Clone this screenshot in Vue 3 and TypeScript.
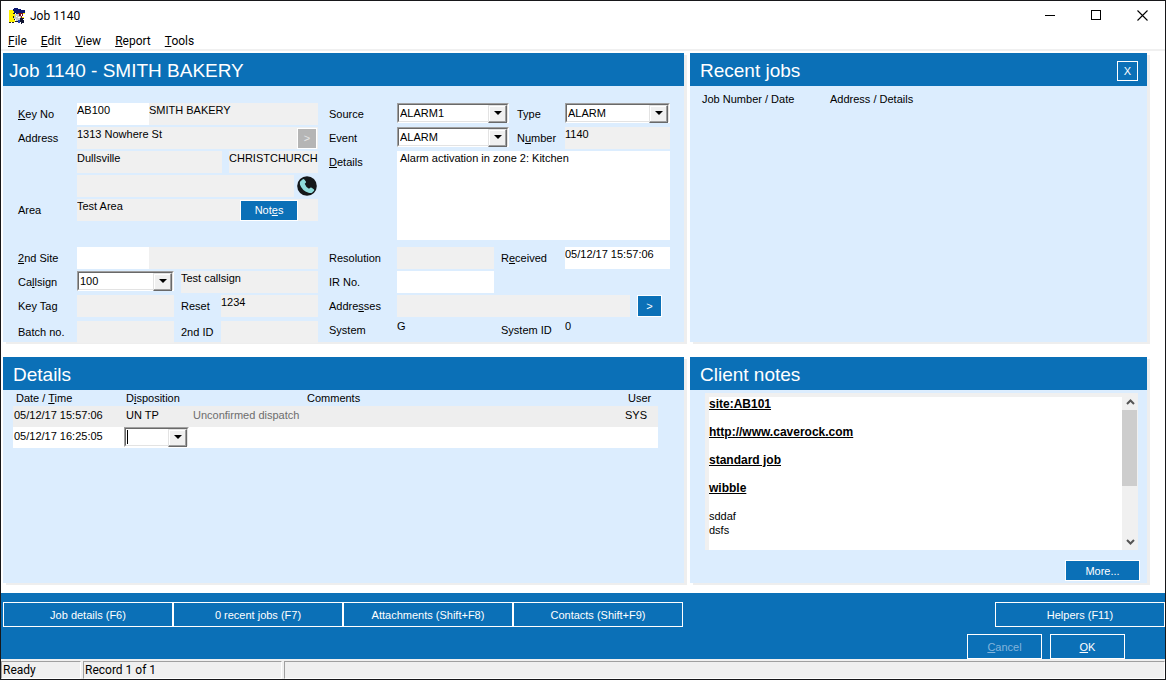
<script setup lang="ts">
import { ref } from 'vue'

const menus: string[] = ['File', 'Edit', 'View', 'Report', 'Tools']
const tabs: string[] = ['Job details (F6)', '0 recent jobs (F7)', 'Attachments (Shift+F8)', 'Contacts (Shift+F9)']
const noteLinks: string[] = ['site:AB101', 'http://www.caverock.com', 'standard job', 'wibble']

const keyNo = ref('AB100')
const source = ref('ALARM1')
const event = ref('ALARM')
const jobType = ref('ALARM')
const callsign = ref('100')
const details = ref('Alarm activation in zone 2: Kitchen')
const received = ref('05/12/17 15:57:06')
const disposition = ref('')
</script>

<template>
  <div class="window">
    <header class="titlebar">
      <svg class="app-icon" viewBox="0 0 16 16" shape-rendering="crispEdges" aria-hidden="true">
        <path d="M0 2h6v12H0zM14 2h2v4h-2zM13 9h2v1h-2z" fill="#fff200" />
        <path d="M5 0h4v1h3v1h4v3h-3v1H7V5H5V3H4V1h1z" fill="#0a1670" />
        <path d="M9 5h5v3h-1v2h-2V8H9z" fill="#7a1020" />
        <path d="M6 6h4v2h2v4H9v1H7v-2H5V9h1z" fill="#c4c7ca" />
        <path d="M7 8h1v1H7zM9 9h2v1H9zM12 6h1v2h-1z" fill="#fff" />
        <path d="M4 5h2v1H4zM4 8h1v2H4zM5 11h1v1H5zM6 13h4v1H6zM11 10h4v1h-1v1h1v3h-2v1h-1v-2h-1z" fill="#101430" />
        <path d="M9 12h2v3H9z" fill="#2446b8" />
        <path d="M0 14h2v1H0zM3 14h2v1H3z" fill="#222" />
      </svg>
      <span class="caption">Job 1140</span>
      <div class="win-buttons">
        <button type="button" aria-label="Minimize">
          <svg viewBox="0 0 11 11" shape-rendering="crispEdges"><path d="M0 5.5h10" stroke="#000" /></svg>
        </button>
        <button type="button" aria-label="Maximize">
          <svg viewBox="0 0 11 11" shape-rendering="crispEdges"><path d="M.5 .5h9v9h-9z" stroke="#000" fill="none" /></svg>
        </button>
        <button type="button" aria-label="Close">
          <svg viewBox="0 0 11 11"><path d="M.5 .5l10 10M10.5 .5l-10 10" stroke="#000" stroke-width="1.1" /></svg>
        </button>
      </div>
    </header>

    <nav class="menubar">
      <button v-for="m in menus" :key="m" type="button"><u>{{ m[0] }}</u>{{ m.slice(1) }}</button>
    </nav>

    <main class="workspace">
      <section class="panel">
        <h1 class="panel-head head-job">Job 1140 - SMITH BAKERY</h1>
        <div class="job-form">
          <div class="form-col">
            <div class="row">
              <label for="keyno"><u>K</u>ey No</label>
              <div class="joined">
                <input id="keyno" v-model="keyNo" class="field code" />
                <input class="field gray" value="SMITH BAKERY" readonly aria-label="Client name" />
              </div>
            </div>
            <div class="row">
              <label for="address">Address</label>
              <div class="gray joined">
                <input id="address" class="field gray" value="1313 Nowhere St" readonly />
                <button type="button" class="btn more-address" disabled>&gt;</button>
              </div>
            </div>
            <div class="row no-label">
              <div class="city">
                <input class="field gray" value="Dullsville" readonly aria-label="Suburb" />
                <input class="field gray" value="CHRISTCHURCH" readonly aria-label="City" />
              </div>
            </div>
            <div class="row no-label">
              <div class="phone">
                <input class="field gray" readonly aria-label="Phone" />
                <button type="button" class="phone-btn" aria-label="Call">
                  <svg viewBox="0 0 20 20">
                    <circle cx="10" cy="10" r="9.8" fill="#15181a" />
                    <path d="M3.2 5.6L5.800 3.200q.9-.6 1.500.2L8.900 5.500q.4.900-.3 1.400l-.9.8q1 3 4.300 5l1.200-.9q.8-.5 1.500 0l2.100 1.500q.8.700.2 1.500l-2 1.900q-1.300.8-3.500 0Q5 14.500 3 8.700q-.5-2 .2-3.100z" fill="#8fdcdc" />
                  </svg>
                </button>
              </div>
            </div>
            <div class="row">
              <label for="area">Area</label>
              <div class="gray joined">
                <input id="area" class="field gray" value="Test Area" readonly />
                <button type="button" class="btn notes-btn">Not<u>e</u>s</button>
              </div>
            </div>
            <div class="row second-block">
              <label for="site2"><u>2</u>nd Site</label>
              <div class="joined">
                <input id="site2" class="field code" />
                <input class="field gray" readonly aria-label="2nd site name" />
              </div>
            </div>
            <div class="row">
              <label for="callsign">Ca<u>l</u>lsign</label>
              <div class="trio">
                <span class="combo">
                  <select id="callsign" v-model="callsign"><option>100</option></select>
                </span>
                <input class="field gray wide" value="Test callsign" readonly aria-label="Callsign name" />
              </div>
            </div>
            <div class="row">
              <label for="keytag">Key Tag</label>
              <div class="trio">
                <input id="keytag" class="field gray" readonly />
                <label for="reset">Reset</label>
                <input id="reset" class="field gray" value="1234" readonly />
              </div>
            </div>
            <div class="row last">
              <label for="batch">Batch no.</label>
              <div class="trio">
                <input id="batch" class="field gray" readonly />
                <label for="id2">2nd ID</label>
                <input id="id2" class="field gray" readonly />
              </div>
            </div>
          </div>

          <div class="form-col right">
            <div class="row">
              <label for="source">Source</label>
              <div class="pair">
                <span class="combo">
                  <select id="source" v-model="source"><option>ALARM1</option></select>
                </span>
                <label for="type">Type</label>
                <span class="combo">
                  <select id="type" v-model="jobType"><option>ALARM</option></select>
                </span>
              </div>
            </div>
            <div class="row">
              <label for="event">Event</label>
              <div class="pair">
                <span class="combo">
                  <select id="event" v-model="event"><option>ALARM</option></select>
                </span>
                <label for="number">N<u>u</u>mber</label>
                <input id="number" class="field gray" value="1140" readonly />
              </div>
            </div>
            <div class="row memo-row">
              <label for="details"><u>D</u>etails</label>
              <textarea id="details" v-model="details"></textarea>
            </div>
            <div class="row resolution">
              <label for="resolution">Resolution</label>
              <div class="pair-narrow">
                <input id="resolution" class="field gray" readonly />
                <label for="received">R<u>e</u>ceived</label>
                <input id="received" v-model="received" class="field" />
              </div>
            </div>
            <div class="row">
              <label for="irno">IR No.</label>
              <div class="pair-narrow">
                <input id="irno" class="field" />
              </div>
            </div>
            <div class="row">
              <label for="addresses">Addre<u>s</u>ses</label>
              <div class="addresses">
                <input id="addresses" class="field gray" readonly />
                <button type="button" class="btn">&gt;</button>
              </div>
            </div>
            <div class="row">
              <label for="system">System</label>
              <div class="pair-narrow">
                <input id="system" class="field clear" value="G" readonly />
                <label for="sysid">System ID</label>
                <input id="sysid" class="field clear" value="0" readonly />
              </div>
            </div>
          </div>
        </div>
      </section>

      <section class="panel">
        <div class="panel-head">
          <h2>Recent jobs</h2>
          <button type="button" class="btn close-btn" aria-label="Close recent jobs">X</button>
        </div>
        <table class="recent">
          <thead>
            <tr><th class="c-job">Job Number / Date</th><th>Address / Details</th></tr>
          </thead>
        </table>
      </section>

      <section class="panel">
        <h2 class="panel-head">Details</h2>
        <table class="log">
          <thead>
            <tr>
              <th class="c-date">Date / <u>T</u>ime</th>
              <th class="c-disp">D<u>i</u>sposition</th>
              <th class="c-comments">Comments</th>
              <th class="c-user">User</th>
            </tr>
          </thead>
          <tbody>
            <tr class="logged">
              <td>05/12/17 15:57:06</td>
              <td class="disp">UN TP</td>
              <td class="comment">Unconfirmed dispatch</td>
              <td>SYS</td>
            </tr>
            <tr class="entry">
              <td>05/12/17 16:25:05</td>
              <td class="combo-cell">
                <span class="combo caret">
                  <select v-model="disposition" aria-label="Disposition"><option value=""></option></select>
                </span>
              </td>
              <td></td>
              <td></td>
            </tr>
          </tbody>
        </table>
      </section>

      <section class="panel">
        <h2 class="panel-head">Client notes</h2>
        <div class="notes-body">
          <div class="notes-box">
            <div class="notes-text">
              <p v-for="n in noteLinks" :key="n"><a href="#">{{ n }}</a></p>
              <p>sddaf<br />dsfs</p>
            </div>
            <div class="scrollbar">
              <button type="button" aria-label="Scroll up">
                <svg viewBox="0 0 9 6"><path d="M1 5l3.500-3.500L8 5" fill="none" stroke="#555" stroke-width="2" /></svg>
              </button>
              <div class="track"><div class="thumb"></div></div>
              <button type="button" aria-label="Scroll down">
                <svg viewBox="0 0 9 6"><path d="M1 1l3.500 3.500L8 1" fill="none" stroke="#555" stroke-width="2" /></svg>
              </button>
            </div>
          </div>
          <button type="button" class="btn more-btn">More...</button>
        </div>
      </section>
    </main>

    <footer class="actions">
      <div class="tabs">
        <button v-for="t in tabs" :key="t" type="button" class="btn tab">{{ t }}</button>
        <button type="button" class="btn tab helpers">Helpers (F11)</button>
      </div>
      <div class="dialog-buttons">
        <button type="button" class="btn" disabled><u>C</u>ancel</button>
        <button type="button" class="btn"><u>O</u>K</button>
      </div>
    </footer>

    <div class="status">
      <span class="s-state">Ready</span>
      <span class="s-record">Record 1 of 1</span>
      <span class="s-fill"></span>
    </div>
  </div>
</template>

<style>
body {
  background: #fff;
}
</style>

<style scoped>
* {
  box-sizing: border-box;
}
.window {
  display: flex;
  flex-direction: column;
  min-height: 100vh;
  border: 1px solid #17171a;
  background: #fff;
  color: #000;
  font: 11px/14px "Liberation Sans", Arial, sans-serif;
}
button,
input,
select,
textarea {
  font: inherit;
  color: inherit;
  margin: 0;
  padding: 0;
  border: 0;
  border-radius: 0;
  background: none;
  outline: none;
}
u {
  text-underline-offset: 1px;
}
.titlebar,
.menubar,
.status {
  font: 12px/16px Roboto, "Segoe UI", sans-serif;
}
.titlebar {
  display: flex;
  align-items: center;
  height: 29px;
  padding-left: 8px;
}
.app-icon {
  width: 16px;
  height: 16px;
}
.caption {
  flex: 1;
  padding-left: 5px;
}
.win-buttons {
  display: flex;
}
.win-buttons button {
  display: flex;
  align-items: center;
  justify-content: center;
  width: 46px;
  height: 29px;
}
.win-buttons svg {
  width: 11px;
  height: 11px;
}
.menubar {
  display: flex;
  gap: 14px;
  height: 21px;
  padding: 2px 7px 0;
  border-bottom: 2px solid #f0f0f0;
}
.workspace {
  flex: 1;
  display: grid;
  grid-template-columns: 681fr 457fr;
  grid-template-rows: auto 1fr;
  gap: 15px 6px;
  padding: 2px 18px 10px 2px;
}
.panel {
  display: flex;
  flex-direction: column;
  min-width: 0;
  background: #dcedfe;
  box-shadow: 3px 2px 0 #eee;
}
.panel-head {
  display: flex;
  align-items: center;
  justify-content: space-between;
  height: 33px;
  margin: 0;
  padding: 2px 9px 0 10px;
  background: #0b70b7;
  color: #fff;
  font-size: 19px;
  line-height: 31px;
  font-weight: 400;
}
.panel-head.head-job {
  padding-left: 6px;
}
.panel-head h2 {
  margin: 0;
  font: inherit;
}
.btn {
  border: 1px solid #fff;
  background: #0b70b7;
  color: #fff;
  text-align: center;
}
.btn:disabled {
  color: #82b4dc;
}
.close-btn {
  width: 21px;
  height: 20px;
  font-size: 11px;
  line-height: 18px;
}

/* job form */
.job-form {
  display: grid;
  grid-template-columns: 300fr 341fr;
  column-gap: 11px;
  padding: 17px 14px 0 15px;
}
.form-col {
  display: flex;
  flex-direction: column;
  gap: 2px;
}
.row {
  display: grid;
  grid-template-columns: 59px 1fr;
  height: 22px;
}
.right .row {
  grid-template-columns: 68px 1fr;
}
.row label {
  line-height: 22px;
  white-space: nowrap;
}
.row.no-label > * {
  grid-column: 2;
}
.row.second-block {
  margin-top: 24px;
}
.row.last {
  height: 21px;
  margin-top: 2px;
}
.row.memo-row {
  height: 89px;
}
.row.resolution {
  margin-top: 5px;
}
.field {
  width: 100%;
  min-width: 0;
  height: 100%;
  padding-bottom: 8px;
  background: #fff;
}
.gray {
  background: #f0f0f0;
}
.field.clear {
  background: none;
}
.joined {
  display: flex;
  align-items: center;
}
.joined .field {
  flex: 1;
}
.joined .field.code {
  flex: 0 0 72px;
}
.more-address {
  width: 20px;
  height: 21px;
  margin-right: 1px;
}
.more-address:disabled {
  background: #b5b5b5;
  color: #e6e6e6;
}
.notes-btn {
  width: 58px;
  height: 21px;
  margin-right: 20px;
}
.city {
  display: grid;
  grid-template-columns: 145fr 89fr;
  gap: 7px;
}
.phone {
  display: flex;
  align-items: center;
  gap: 3px;
}
.phone-btn,
.phone-btn svg {
  display: block;
  flex: none;
  width: 20px;
  height: 20px;
}
.phone-btn {
  margin-right: 1px;
}
.trio {
  display: grid;
  grid-template-columns: 1fr 33px 1fr;
  gap: 7px;
}
.wide {
  grid-column: span 2;
}
.pair {
  display: grid;
  grid-template-columns: 112fr 40px 105fr;
  gap: 8px;
}
.pair-narrow {
  display: grid;
  grid-template-columns: 97fr 57px 105fr;
  gap: 7px;
}
.addresses {
  display: grid;
  grid-template-columns: 1fr 25px;
  gap: 7px;
  padding-right: 8px;
}
textarea {
  width: 100%;
  height: 100%;
  padding: 0 3px;
  background: #fff;
  resize: none;
}

/* sunken drop-down with a raised arrow button */
.combo {
  position: relative;
  display: block;
  height: 20px;
  border: 1px solid;
  border-color: #a0a0a0 #fff #fff #a0a0a0;
  background: #fff;
}
.combo select {
  appearance: none;
  display: block;
  width: 100%;
  height: 18px;
  padding: 0 18px 0 1px;
  border: 1px solid;
  border-color: #696969 #e3e3e3 #e3e3e3 #696969;
}
.combo::before {
  content: "";
  position: absolute;
  top: 1px;
  right: 1px;
  width: 17px;
  height: 16px;
  border: 1px solid;
  border-color: #e3e3e3 #696969 #696969 #e3e3e3;
  background: #f0f0f0;
  box-shadow: inset -1px -1px 0 #a0a0a0, inset 1px 1px 0 #fff;
  pointer-events: none;
}
.combo::after {
  content: "";
  position: absolute;
  top: 7px;
  right: 6px;
  border: 4px solid transparent;
  border-top-color: #000;
  border-bottom: 0;
  pointer-events: none;
}
.combo.caret select {
  background: linear-gradient(#000, #000) 1px 1px / 1px 14px no-repeat;
}

/* tables */
table {
  border-collapse: collapse;
  table-layout: fixed;
}
th,
td {
  padding: 0;
  text-align: left;
  font-weight: 400;
  white-space: nowrap;
}
.recent {
  margin: 6px 12px;
}
.recent .c-job {
  width: 128px;
}
.log {
  margin: 0 26px 0 10px;
}
.log th {
  height: 16px;
}
.log .c-date {
  width: 111px;
  padding-left: 3px;
}
.log .c-disp {
  width: 65px;
  padding-left: 2px;
}
.log .c-comments {
  padding-left: 118px;
}
.log .c-user {
  width: 46px;
  padding-left: 16px;
}
.log td {
  height: 21px;
  padding: 2px 0 0 1px;
  vertical-align: top;
}
.log td.disp {
  padding-left: 2px;
}
.log td:last-child {
  padding-left: 13px;
}
.log td.comment {
  padding-left: 4px;
  color: #6d6d6d;
}
.logged {
  background: #eee;
}
.entry {
  background: #fff;
}
.log td.combo-cell {
  padding: 0;
}

/* client notes */
.notes-body {
  flex: 1;
  display: flex;
  flex-direction: column;
  align-items: flex-end;
  gap: 10px;
  padding: 3px 7px 2px 15px;
}
.notes-box {
  flex: 1;
  align-self: stretch;
  display: flex;
  margin-right: 2px;
  background: #fff;
}
.notes-text {
  flex: 1;
  border-top: 4px solid #f0f0f0;
  border-left: 4px solid #f0f0f0;
}
.notes-text p {
  margin: 0 0 14px;
}
.notes-text p:last-child {
  margin: 0;
}
.notes-text a {
  color: #000;
  font-size: 12px;
  font-weight: 700;
  text-underline-offset: 1px;
}
.scrollbar {
  display: flex;
  flex-direction: column;
  width: 16px;
  background: #f0f0f0;
}
.scrollbar button {
  display: flex;
  align-items: center;
  justify-content: center;
  height: 17px;
}
.scrollbar svg {
  width: 9px;
  height: 6px;
}
.track {
  flex: 1;
}
.thumb {
  width: 15px;
  height: 62%;
  background: #cdcdcd;
}
.more-btn {
  width: 75px;
  height: 21px;
  line-height: 18px;
}

/* footer */
.actions {
  display: flex;
  flex-direction: column;
  gap: 7px;
  height: 66px;
  padding: 9px 0 0 2px;
  background: #0b70b7;
}
.tabs {
  display: flex;
}
.tab {
  width: 170px;
  height: 25px;
}
.helpers {
  margin-left: auto;
}
.dialog-buttons {
  display: flex;
  justify-content: flex-end;
  gap: 8px;
  padding-right: 40px;
}
.dialog-buttons .btn {
  width: 75px;
  height: 25px;
}
.status {
  display: flex;
  gap: 2px;
  height: 20px;
  padding-top: 2px;
  background: #f0f0f0;
}
.status span {
  padding-left: 1px;
  border: 1px solid;
  border-color: #a0a0a0 #fff #fff #a0a0a0;
}
.s-state {
  width: 80px;
}
.s-record {
  width: 199px;
}
.s-fill {
  flex: 1;
}
</style>
